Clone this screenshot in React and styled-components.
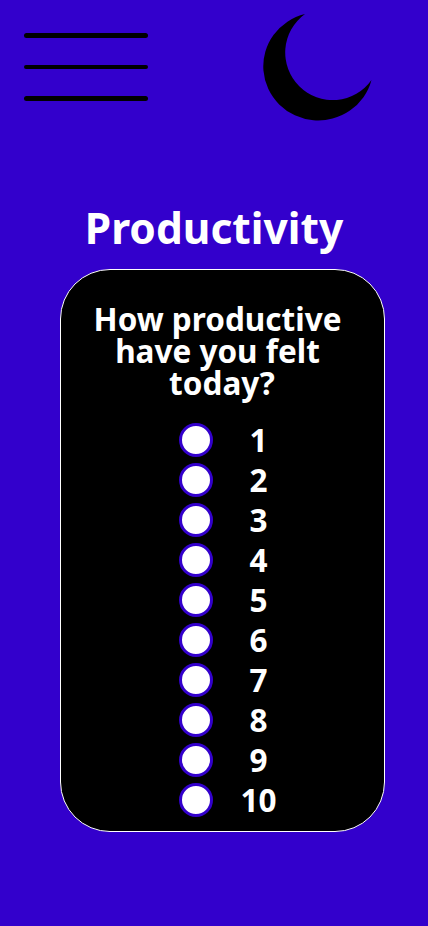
import React from 'react';
import styled, { createGlobalStyle } from 'styled-components';

const Global = createGlobalStyle`
  html, body { margin: 0; padding: 0; background: #3300cc; }
  body { font-family: "Noto Sans", "Open Sans", sans-serif; }
`;
const Page = styled.div`
  width: 428px; height: 926px; box-sizing: border-box; background: #3300cc; overflow: hidden;
  display: flex; flex-direction: column; align-items: center; padding-top: 14px;
`;
const Header = styled.header`
  width: 100%; height: 106px; box-sizing: border-box; padding: 19px 55px 0 24px;
  display: flex; justify-content: space-between; align-items: flex-start;
`;
const Burger = styled.div`
  width: 124px; display: flex; flex-direction: column; gap: 27px;
`;
const Line = styled.span`
  display: block; height: 4.5px; background: #000; border-radius: 3px;
`;
const Moon = styled.svg`
  display: block; width: 110px; height: 108px; margin-top: -19px; flex: none;
`;
const Title = styled.h1`
  margin: 83px 0 0; height: 50px; color: #fff; font-size: 42.5px; line-height: 50px; font-weight: 700; text-align: center;
`;
const Card = styled.main`
  margin: 16px 0 0 17px; width: 325px; height: 563px; box-sizing: border-box; background: #000;
  border: 1px solid #fff; border-radius: 50px; padding-top: 33px;
  display: flex; flex-direction: column; align-items: center;
`;
const Question = styled.h2`
  margin: 0 10px 0 0; color: #fff; font-size: 31.5px; line-height: 32px; font-weight: 700; text-align: center;
`;
const QuestionLine = styled.span`
  display: block; padding-left: ${p => (p.$shift ? 9 : 0)}px;
`;
const Options = styled.div`
  margin-top: 21px; display: flex; flex-direction: column;
`;
const Option = styled.label`
  height: 40px; display: grid; grid-template-columns: 34px 91px; align-items: center; margin-left: 38px;
`;
const Radio = styled.span`
  width: 34px; height: 34px; box-sizing: border-box; border-radius: 50%; background: #fff; border: 3px solid #3300cc;
`;
const Num = styled.span`
  color: #fff; font-size: 31.5px; font-weight: 700; line-height: 40px; text-align: center;
`;

export default function App() {
  return (
    <Page>
      <Global />
      <Header>
        <Burger><Line /><Line /><Line /></Burger>
        <Moon viewBox="263 14 110 108">
          <path d="M305 14 A55 54 0 1 0 371.5 80 A47.5 47.5 0 1 1 305 14 Z" fill="#000" />
        </Moon>
      </Header>
      <Title>Productivity</Title>
      <Card>
        <Question>
          <QuestionLine>How productive</QuestionLine>
          <QuestionLine>have you felt</QuestionLine>
          <QuestionLine $shift>today?</QuestionLine>
        </Question>
        <Options>
          {[1,2,3,4,5,6,7,8,9,10].map(n => (
            <Option key={n}><Radio /><Num>{n}</Num></Option>
          ))}
        </Options>
      </Card>
    </Page>
  );
}
